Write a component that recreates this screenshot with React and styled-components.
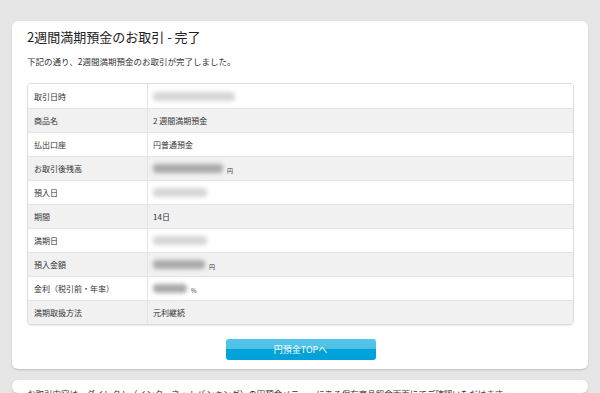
import React from "react";
import styled, { createGlobalStyle } from "styled-components";

const GlobalStyle = createGlobalStyle`
  body {
    margin: 0;
    background: #e6e6e6;
    font-family: "Noto Sans CJK JP", "Noto Sans", sans-serif;
    color: #333;
  }
`;

const rows = [
  { label: "取引日時", blur: 82, light: true },
  { label: "商品名", value: "2 週間満期預金" },
  { label: "払出口座", value: "円普通預金" },
  { label: "お取引後残高", blur: 70, unit: "円" },
  { label: "預入日", blur: 54, light: true },
  { label: "期間", value: "14日" },
  { label: "満期日", blur: 54, light: true },
  { label: "預入金額", blur: 52, unit: "円" },
  { label: "金利（税引前・年率）", blur: 34, unit: "%" },
  { label: "満期取扱方法", value: "元利継続" },
];

const App = () => {
  return (
    <>
      <GlobalStyle />
      <StyledPage>
        <StyledCard>
          <StyledTitle>2週間満期預金のお取引 - 完了</StyledTitle>
          <StyledLead>下記の通り、2週間満期預金のお取引が完了しました。</StyledLead>
          <StyledTable>
            {rows.map((r, i) => (
              <StyledRow key={r.label} $alt={i % 2 === 1}>
                <StyledLabel>{r.label}</StyledLabel>
                <StyledValue>
                  {r.value}
                  {r.blur && <StyledBlur $light={r.light} style={{ width: r.blur }} />}
                  {r.unit && <StyledUnit>{r.unit}</StyledUnit>}
                </StyledValue>
              </StyledRow>
            ))}
          </StyledTable>
          <StyledActions>
            <StyledButton>円預金TOPへ</StyledButton>
          </StyledActions>
        </StyledCard>
        <StyledNote>
          お取引内容は、ダイレクト（インターネットバンキング）の円預金メニューにある保有商品照会画面にてご確認いただけます。
        </StyledNote>
      </StyledPage>
    </>
  );
};

const StyledPage = styled.div`
  padding: 21px 12px 0;
  height: 393px;
  box-sizing: border-box;
  overflow: hidden;
  display: flex;
  flex-direction: column;
  gap: 11px;
`;

const StyledCard = styled.div`
  background: #fff;
  border-radius: 6px;
  box-shadow: 0 1px 2px rgba(0, 0, 0, 0.18);
  padding: 7px 14px 9px 15px;
`;

const StyledTitle = styled.h1`
  margin: 0;
  font-size: 13px;
  font-weight: normal;
  line-height: 18px;
  color: #222;
`;

const StyledLead = styled.p`
  margin: 9px 0 0;
  font-size: 8.5px;
  line-height: 12px;
  color: #333;
`;

const StyledTable = styled.div`
  margin-top: 16px;
  border: 1px solid #dcdcdc;
  border-radius: 4px;
  overflow: hidden;
  box-shadow: 0 1px 1px rgba(0, 0, 0, 0.08);
`;

const StyledRow = styled.div`
  display: grid;
  grid-template-columns: 120px 1fr;
  height: 24px;
  box-sizing: border-box;
  background: ${(p) => (p.$alt ? "#f1f1f1" : "#fff")};
  & + & {
    border-top: 1px solid #e4e4e4;
  }
`;

const StyledLabel = styled.div`
  display: flex;
  align-items: center;
  padding-left: 6px;
  font-size: 8px;
  color: #333;
  border-right: 1px solid #e4e4e4;
`;

const StyledValue = styled.div`
  display: flex;
  align-items: center;
  padding-left: 5px;
  font-size: 8px;
  color: #333;
`;

const StyledBlur = styled.span`
  display: inline-block;
  height: 9px;
  border-radius: 4px;
  background: ${(p) => (p.$light ? "#d6d6d6" : "#aaa")};
  filter: blur(2px);
`;

const StyledUnit = styled.span`
  margin-left: 4px;
  font-size: 6px;
  margin-top: 3px;
`;

const StyledActions = styled.div`
  display: flex;
  justify-content: center;
  margin-top: 14px;
`;

const StyledButton = styled.button`
  width: 150px;
  height: 21px;
  border: none;
  border-radius: 3px;
  background: linear-gradient(#55c6ea 0%, #4cc0e6 45%, #02a3da 50%, #00a0d8 100%);
  color: #fff;
  font-family: "Noto Sans CJK JP", sans-serif;
  font-size: 9px;
  padding: 0;
  cursor: pointer;
`;

const StyledNote = styled.div`
  background: #fff;
  border-radius: 6px;
  box-shadow: 0 1px 2px rgba(0, 0, 0, 0.18);
  padding: 6px 15px;
  font-size: 8.5px;
  line-height: 14px;
  color: #333;
  white-space: nowrap;
  overflow: hidden;
`;

export default App;
